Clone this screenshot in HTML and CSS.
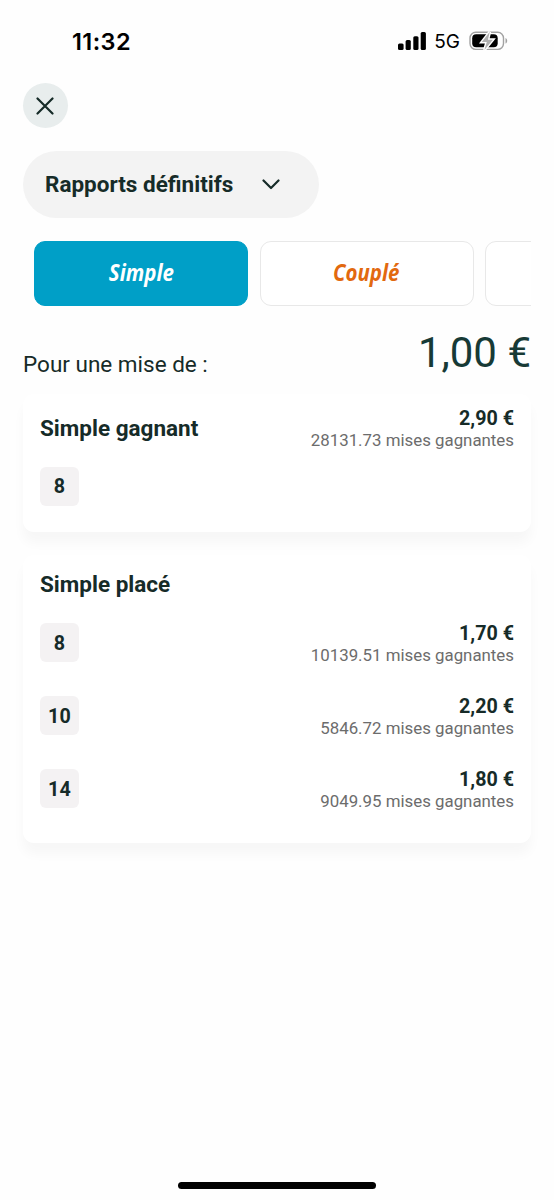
FILE: index.html
```html
<!DOCTYPE html>
<html lang="fr">
<head>
<meta charset="utf-8">
<meta name="viewport" content="width=device-width, initial-scale=1">
<title>Rapports définitifs</title>
<link rel="stylesheet" href="styles.css">
</head>
<body>
<div class="screen">
  <header class="status">
    <span class="clock">11:32</span>
    <div class="indicators">
      <svg class="signal" viewBox="0 0 29 18" width="29" height="18"><rect x="0" y="11.500" width="5.600" height="6.500" rx="1.500"/><rect x="7.600" y="8" width="5.200" height="10" rx="1.500"/><rect x="15.300" y="4.200" width="5.200" height="13.800" rx="1.500"/><rect x="22.700" y="0" width="5.200" height="18" rx="1.500"/></svg>
      <span class="network">5G</span>
      <svg class="battery" viewBox="0 0 40 20" width="40" height="20">
        <rect x="1" y="1.200" width="33.500" height="17.200" rx="5.800" fill="none" stroke="#a2a2a2" stroke-width="1.400"/>
        <path d="M36.500 7v5.600c2.300-.9 2.300-4.700 0-5.600z" fill="#a2a2a2"/>
        <rect x="3.200" y="3.300" width="25.500" height="13" rx="4"/>
        <path d="M20.800 0.800 12.800 11h5l-2.400 8L23.900 8.700H18.900z" fill="#b0b0b0" stroke="#fff" stroke-width="2.800" paint-order="stroke"/>
      </svg>
    </div>
  </header>
  <main class="content">
    <button class="close" aria-label="Fermer"><svg viewBox="0 0 18 18" width="18" height="18"><path d="M1.500 1.500 16.500 16.500M16.500 1.500 1.500 16.500"/></svg></button>
    <button class="select"><span class="select-label">Rapports définitifs</span><svg viewBox="0 0 18 11" width="18" height="11"><path d="M1.500 1.500 9 9 16.500 1.500"/></svg></button>
    <nav class="tabs">
      <button class="tab tab-active"><span class="tab-label">Simple</span></button>
      <button class="tab"><span class="tab-label">Couplé</span></button>
      <button class="tab"></button>
    </nav>
    <div class="stake"><span class="stake-label">Pour une mise de :</span><span class="stake-value">1,00 €</span></div>
    <section class="card card-winner">
      <div class="card-head"><h2 class="card-title">Simple gagnant</h2><div class="payout"><strong class="amount">2,90 €</strong><span class="count">28131.73 mises gagnantes</span></div></div>
      <span class="badge">8</span>
    </section>
    <section class="card card-placed">
      <h2 class="card-title">Simple placé</h2>
      <div class="row"><span class="badge">8</span><div class="payout"><strong class="amount">1,70 €</strong><span class="count">10139.51 mises gagnantes</span></div></div>
      <div class="row"><span class="badge">10</span><div class="payout"><strong class="amount">2,20 €</strong><span class="count">5846.72 mises gagnantes</span></div></div>
      <div class="row"><span class="badge">14</span><div class="payout"><strong class="amount">1,80 €</strong><span class="count">9049.95 mises gagnantes</span></div></div>
    </section>
  </main>
  <div class="home-bar"></div>
</div>
</body>
</html>
```
FILE: styles.css
```css
* { box-sizing: border-box; }
body { margin: 0; background: #fefefe; color: #162b28; font-family: Roboto, sans-serif; }
button { border: 0; padding: 0; margin: 0; font: inherit; color: inherit; }
.screen { display: flex; flex-direction: column; height: 1200px; overflow: hidden; }
.status { display: flex; justify-content: space-between; align-items: center; height: 83px; padding: 0 45px 0 72px; color: #000; }
.clock { font: 600 23.500px/28px Inter, sans-serif; letter-spacing: 0.4px; }
.indicators { display: flex; align-items: center; padding-bottom: 1px; }
.network { margin: 0 9px 0 7px; padding-top: 2px; font: 400 19px/24px Inter, sans-serif; }
.content { display: flex; flex-direction: column; align-items: flex-start; padding: 0 23px; }
.close { display: flex; align-items: center; justify-content: center; width: 45px; height: 45px; padding-right: 1px; border-radius: 50%; background: #e8eded; }
.close svg, .select svg { fill: none; stroke: #162b28; stroke-width: 2.2; stroke-linecap: round; stroke-linejoin: round; }
.select { display: flex; align-items: center; gap: 28.500px; width: 296px; height: 67px; margin-top: 23px; padding-left: 22px; border-radius: 34px; background: #f3f3f3; }
.select-label { padding-bottom: 2px; font-size: 22.500px; font-weight: 700; }
.tabs { display: flex; gap: 11.500px; width: 508px; margin-top: 23px; padding-left: 11px; overflow: hidden; }
.tab { flex: 0 0 214px; display: flex; align-items: center; justify-content: center; height: 65px; padding-bottom: 4px; border: 1.500px solid #e8e8e8; border-radius: 11px; background: #fff; color: #e2690f; }
.tab-active { border-color: #009fc7; background: #009fc7; color: #fff; }
.tab-label { font: italic 700 23.500px/30px "Open Sans", sans-serif; transform: scaleX(0.87); }
.stake { display: flex; justify-content: space-between; align-items: flex-start; align-self: stretch; height: 88px; padding-top: 22px; }
.stake-label { padding-top: 21px; font-size: 22.500px; line-height: 30px; }
.stake-value { font-size: 42px; line-height: 50px; color: #173a36; }
.card { align-self: stretch; padding: 0 17px; border-radius: 11px; background: #fff; box-shadow: 0 11px 12px rgba(0, 0, 0, 0.03); }
.card-winner { height: 138px; padding-top: 12px; }
.card-placed { height: 288px; margin-top: 23px; padding-top: 15px; }
.card-head { display: flex; justify-content: space-between; height: 61px; }
.card-head .card-title { padding-top: 8px; }
.card-head .payout { padding-top: 2px; }
.card-title { margin: 0; font-size: 22.500px; line-height: 28px; font-weight: 700; }
.card-placed .card-title { margin-bottom: 25px; }
.row { display: flex; justify-content: space-between; height: 73.200px; }
.badge { display: flex; align-items: center; justify-content: center; width: 39px; height: 39px; border-radius: 6px; background: #f4f2f3; font-size: 19.700px; font-weight: 700; letter-spacing: 0.3px; }
.row .badge { padding-top: 1px; }
.payout { display: flex; flex-direction: column; align-items: flex-end; }
.amount { font-size: 19.700px; line-height: 22px; font-weight: 700; }
.count { font-size: 16.850px; line-height: 20px; color: #6c6c6c; }
.home-bar { width: 198px; height: 7px; margin: auto auto 11px 178px; border-radius: 4px; background: #000; }
```
